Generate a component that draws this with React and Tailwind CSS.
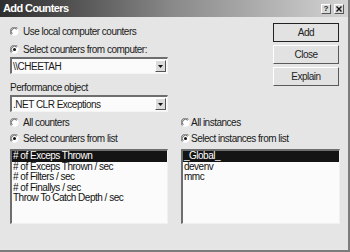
import React from "react";

function Radio({ checked }) {
  return (
    <svg width="9" height="9" viewBox="0 0 12 12" className="shrink-0">
      <circle cx="6" cy="6" r="5.5" fill="#ffffff" />
      <path d="M2 10 A5.5 5.5 0 0 1 10 2" fill="none" stroke="#7a7a7a" strokeWidth="1.4" />
      <path d="M3 9 A4.2 4.2 0 0 1 9 3" fill="none" stroke="#303030" strokeWidth="1" />
      {checked && <circle cx="6" cy="6" r="2" fill="#111111" />}
    </svg>
  );
}

function RadioRow({ checked, label, gap = "gap-[4px]" }) {
  return (
    <div className={`flex items-center h-[14px] ${gap}`}>
      <Radio checked={checked} />
      <span className="whitespace-nowrap">{label}</span>
    </div>
  );
}

function Combo({ value }) {
  return (
    <div className="h-[17px] flex items-stretch bg-[#fbfbfb] border-t-[2px] border-l-[2px] border-b border-r border-t-[#6e6e6e] border-l-[#6e6e6e] border-b-[#f4f4f4] border-r-[#f4f4f4]">
      <div className="flex-1 flex items-center pl-[1px] whitespace-nowrap">{value}</div>
      <div className="w-[11px] my-[1px] mr-[1px] bg-[#dcdcdc] border-t border-l border-b border-r border-t-[#ffffff] border-l-[#ffffff] border-b-[#555555] border-r-[#555555] flex items-center justify-center">
        <svg width="5" height="3" viewBox="0 0 5 3">
          <path d="M0 0 H5 L2.5 3 Z" fill="#111111" />
        </svg>
      </div>
    </div>
  );
}

function Button({ label, def }) {
  return (
    <div
      className={`w-[66px] h-[19px] flex items-center justify-center bg-[#e2e2e2] border ${
        def
          ? "border-[#222222]"
          : "border-t-[#ffffff] border-l-[#ffffff] border-b-[#5a5a5a] border-r-[#5a5a5a]"
      }`}
    >
      <span className="text-[#222222]">{label}</span>
    </div>
  );
}

function ListBox({ items, selected }) {
  return (
    <div className="h-[75px] bg-[#fbfbfb] border-t-[2px] border-l-[2px] border-b border-r border-t-[#6e6e6e] border-l-[#6e6e6e] border-b-[#f0f0f0] border-r-[#f0f0f0] flex flex-col">
      {items.map((it, i) => (
        <div
          key={i}
          className={`h-[10.5px] leading-[10.5px] pl-[1px] whitespace-nowrap ${
            i === selected ? "bg-[#141414] text-white" : "text-[#111111]"
          }`}
        >
          {it}
        </div>
      ))}
    </div>
  );
}

export default function App() {
  return (
    <div
      className="w-[350px] h-[252px] bg-[#e5e5e5] flex flex-col border-r-[2px] border-b-[2px] border-[#7c7c7c] overflow-hidden text-[10px] tracking-[-0.5px] text-[#1a1a1a]"
      style={{ fontFamily: '"Liberation Sans", Arial, sans-serif' }}
    >
      <div className="h-[17px] shrink-0 flex items-center justify-between pl-[3px] pr-[4px] bg-gradient-to-r from-[#2e2e2e] via-[#8a8a8a] to-[#d4d4d4]">
        <span className="text-white font-bold text-[11px] tracking-[-0.6px]">Add Counters</span>
        <div className="flex items-center gap-[3px] mt-[1px]">
          <div className="w-[10px] h-[10px] bg-[#dadada] border border-t-[#ffffff] border-l-[#ffffff] border-b-[#555555] border-r-[#555555] flex items-center justify-center text-[8px] font-bold leading-none tracking-normal">
            ?
          </div>
          <div className="w-[10px] h-[10px] bg-[#dadada] border border-t-[#ffffff] border-l-[#ffffff] border-b-[#555555] border-r-[#555555] flex items-center justify-center">
            <svg width="6" height="6" viewBox="0 0 6 6">
              <path d="M0.5 0.5 L5.5 5.5 M5.5 0.5 L0.5 5.5" stroke="#111111" strokeWidth="1.4" />
            </svg>
          </div>
        </div>
      </div>

      <div className="flex pl-[10px] pr-[9px]">
        <div className="w-[158px] flex flex-col pt-[7px]">
          <RadioRow label="Use local computer counters" />
          <div className="mt-[4px]">
            <RadioRow checked label="Select counters from computer:" />
          </div>
          <div className="mt-[1px]">
            <Combo value="\\CHEETAH" />
          </div>
          <div className="mt-[6px] h-[14px] flex items-center">Performance object</div>
          <div className="mt-[1px]">
            <Combo value=".NET CLR Exceptions" />
          </div>
        </div>
        <div className="ml-auto flex flex-col gap-[3px] pt-[6px]">
          <Button label="Add" def />
          <Button label="Close" />
          <Button label="Explain" />
        </div>
      </div>

      <div className="grid grid-cols-[158px_159px] gap-x-[13px] pl-[10px] mt-[3px]">
        <div className="flex flex-col">
          <RadioRow label="All counters" />
          <div className="mt-[2px]">
            <RadioRow checked label="Select counters from list" />
          </div>
          <div className="mt-[4px]">
            <ListBox
              selected={0}
              items={[
                "# of Exceps Thrown",
                "# of Exceps Thrown / sec",
                "# of Filters / sec",
                "# of Finallys / sec",
                "Throw To Catch Depth / sec",
              ]}
            />
          </div>
        </div>
        <div className="flex flex-col">
          <RadioRow label="All instances" gap="gap-[1px]" />
          <div className="mt-[2px]">
            <RadioRow checked label="Select instances from list" gap="gap-[1px]" />
          </div>
          <div className="mt-[4px]">
            <ListBox selected={0} items={["_Global_", "devenv", "mmc"]} />
          </div>
        </div>
      </div>
    </div>
  );
}
